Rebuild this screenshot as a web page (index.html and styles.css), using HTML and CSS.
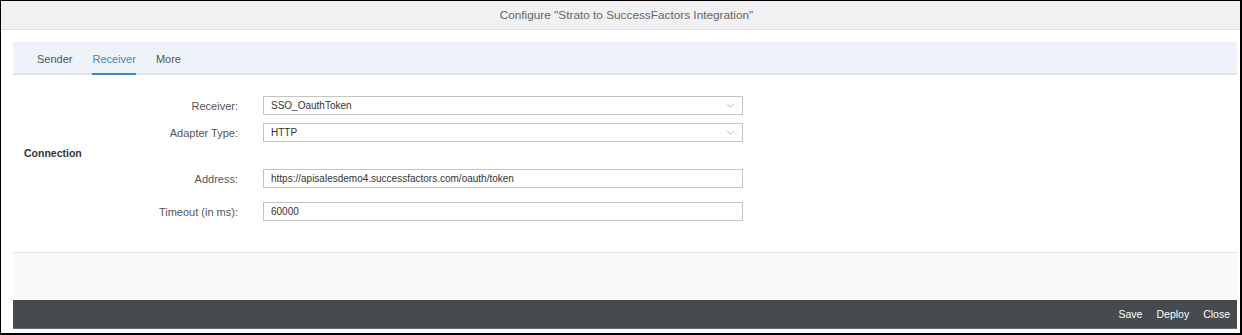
FILE: index.html
```html
<!DOCTYPE html>
<html lang="en">
<head>
  <meta charset="UTF-8" />
  <title>Configure Integration</title>
  <link rel="stylesheet" href="styles.css">
</head>
<body>
  <div class="frame">
    <div class="dialog-header">Configure "Strato to SuccessFactors Integration"</div>
    <div class="dialog-body">
      <div class="tabs">
        <span class="tab">Sender</span>
        <span class="tab active">Receiver</span>
        <span class="tab">More</span>
      </div>
      <div class="form">
        <div class="form-row">
          <label>Receiver:</label>
          <div class="field select">SSO_OauthToken
            <svg viewBox="0 0 10 6"><path d="M1 1L5 5L9 1"/></svg>
          </div>
        </div>
        <div class="form-row">
          <label>Adapter Type:</label>
          <div class="field select">HTTP
            <svg viewBox="0 0 10 6"><path d="M1 1L5 5L9 1"/></svg>
          </div>
        </div>
        <div class="section-title">Connection</div>
        <div class="form-row">
          <label>Address:</label>
          <div class="field">https://apisalesdemo4.successfactors.com/oauth/token</div>
        </div>
        <div class="form-row timeout">
          <label>Timeout (in ms):</label>
          <div class="field">60000</div>
        </div>
      </div>
      <div class="spacer"></div>
      <div class="footer">
        <button>Save</button>
        <button>Deploy</button>
        <button>Close</button>
      </div>
    </div>
  </div>
</body>
</html>
```

FILE: styles.css
```css
* { box-sizing: border-box; }
body {
  margin: 0;
  font-family: 'Liberation Sans', Arial, sans-serif;
  background: #fff;
}
.frame {
  width: 1242px;
  height: 335px;
  border: solid #000;
  border-width: 1px 2px 2px 1px;
  display: flex;
  flex-direction: column;
}
.dialog-header {
  height: 29px;
  background: #f1f1f3;
  border-bottom: 1px solid #dedee0;
  color: #666;
  font-size: 11.8px;
  display: flex;
  align-items: center;
  justify-content: center;
  padding-left: 12px;
}
.dialog-body {
  flex: 1;
  display: flex;
  flex-direction: column;
  padding: 12px 3px 4px 12px;
}
.tabs {
  height: 33px;
  background: #edf3f9;
  border-bottom: 2px solid #dfe2e5;
  display: flex;
  align-items: stretch;
  padding-left: 14px;
}
.tab {
  margin: 0 10px;
  font-size: 11px;
  color: #555;
  display: flex;
  align-items: center;
  padding-top: 2px;
  border-bottom: 2px solid transparent;
  margin-bottom: -2px;
}
.tab.active {
  color: #3d88c4;
  border-bottom-color: #3d88c4;
}
.form {
  padding-top: 21px;
  display: flex;
  flex-direction: column;
}
.form-row {
  display: grid;
  grid-template-columns: 225px 480px;
  column-gap: 25px;
  align-items: center;
  margin-bottom: 8px;
}
.form-row label {
  text-align: right;
  font-size: 11px;
  color: #555;
}
.field {
  height: 19px;
  border: 1px solid #c4c4c4;
  font-size: 10px;
  color: #333;
  padding: 0 7px;
  display: flex;
  align-items: center;
  justify-content: space-between;
}
.field svg {
  width: 9px;
  height: 5px;
  stroke: #a8a8a8;
  fill: none;
  stroke-width: 1;
}
.section-title {
  font-size: 10.5px;
  font-weight: 700;
  color: #333;
  padding-left: 11px;
  margin: -3px 0 10px;
}
.form-row.timeout {
  margin-top: 6px;
}
.spacer {
  margin-top: 23px;
  flex: 1;
  background: #fafafa;
  border-top: 1px solid #e6e6e6;
}
.footer {
  height: 29px;
  background: #464b4f;
  border-bottom: 1px solid #5f6d78;
  display: flex;
  justify-content: flex-end;
  align-items: center;
  padding-right: 0;
}
.footer button {
  background: none;
  border: none;
  color: #fff;
  font-family: inherit;
  font-size: 10.5px;
  padding: 0 7px;
}
```
